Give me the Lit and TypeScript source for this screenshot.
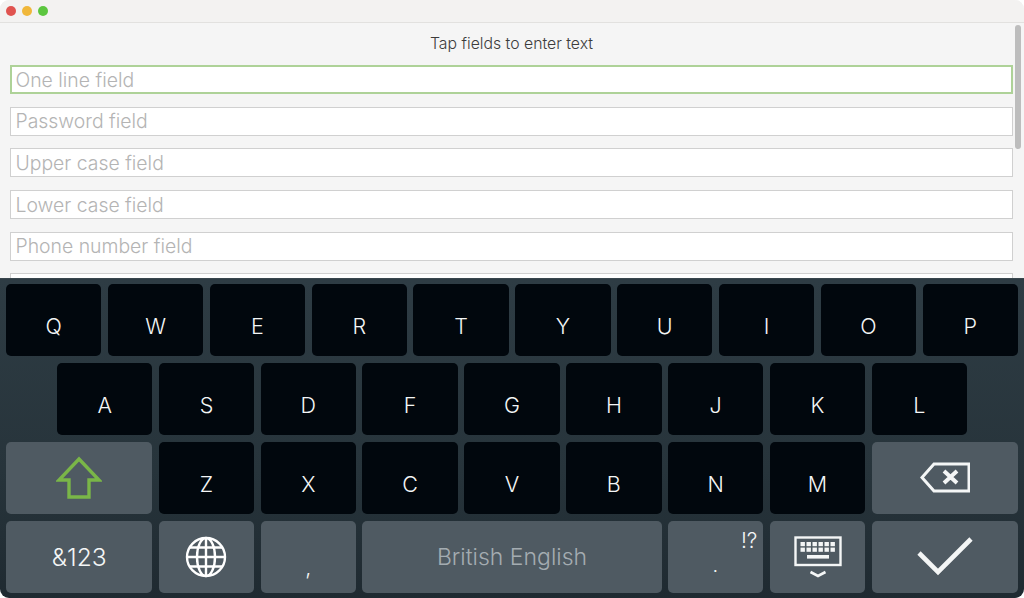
import { LitElement, html, svg, css } from "lit";
import { customElement } from "lit/decorators.js";

const FIELDS = ["One line field", "Password field", "Upper case field", "Lower case field", "Phone number field", ""];
const ROW1 = ["Q", "W", "E", "R", "T", "Y", "U", "I", "O", "P"];
const ROW2 = ["A", "S", "D", "F", "G", "H", "J", "K", "L"];
const ROW3 = ["Z", "X", "C", "V", "B", "N", "M"];

@customElement("app-root")
export class AppRoot extends LitElement {
  static styles = css`
    :host { display: block; width: 1024px; height: 598px; background: #fff; font-family: Inter, "Liberation Sans", sans-serif; }
    .window { width: 1024px; height: 598px; display: flex; flex-direction: column; overflow: hidden; border-radius: 9px; background: #f5f5f5; }
    .titlebar { flex: none; height: 22px; display: flex; align-items: center; gap: 6px; padding-left: 6px; background: #f3f2f1; border-bottom: 1px solid #e2e1df; box-sizing: content-box; }
    .dot { width: 10px; height: 10px; border-radius: 50%; }
    .content { flex: 1; min-height: 0; position: relative; overflow: hidden; padding: 0 11px 0 10px; display: flex; flex-direction: column; }
    .heading { flex: none; height: 42px; padding-bottom: 2px; box-sizing: border-box; display: flex; align-items: center; justify-content: center; font-size: 15.8px; font-weight: 300; color: #3c3c3c; }
    .fields { display: flex; flex-direction: column; gap: 12.7px; }
    .field { flex: none; height: 29px; box-sizing: border-box; background: #fff; border: 1px solid #d0d0d0; padding: 0 0 0 4.5px; display: flex; align-items: center; font-size: 19.4px; font-weight: 300; color: #b4b4b4; }
    .field.active { border: 2px solid #aed298; padding-left: 3.5px; }
    .scrollbar { position: absolute; left: 1015px; top: 2px; width: 6px; height: 124px; background: #bdbdbd; border-radius: 3px; }
    .keyboard { flex: none; height: 320px; box-sizing: border-box; padding: 5px 6px 6px; background: linear-gradient(#2e3c44, #27343b 60%, #1f2a31); border-top: 1px solid #39464d; display: grid; grid-template-columns: repeat(20, minmax(0, 1fr)); grid-auto-rows: 72.3px; column-gap: 6.4px; row-gap: 6.6px; }
    .key { grid-column: span 2; border-radius: 5px; background: #01070d; color: #f4f6f6; font-size: 21.5px; font-weight: 350; display: flex; align-items: flex-end; justify-content: center; padding-bottom: 18px; box-sizing: border-box; line-height: 24px; }
    .key.start2 { grid-column: 2 / span 2; }
    .key.fn { background: #4f5a62; }
    .key.w3 { grid-column: span 3; }
    .key.w6 { grid-column: span 6; }
    .key.center { align-items: center; padding-bottom: 0; }
    .key.lang { color: #a4acb1; font-size: 23px; font-weight: 300; }
    .key.comma { padding-bottom: 14px; }
    .num { font-size: 24.5px; font-weight: 300; }
    .punct { position: relative; }
    .punct .alt { position: absolute; right: 6px; top: 8px; font-size: 21px; font-weight: 300; }
    .punct .dotc { position: absolute; left: 45px; bottom: 19px; font-size: 16px; line-height: 16px; font-weight: 400; }
    svg { display: block; }
  `;

  private keyGlyphs() {
    const cells = [];
    for (const y of [6, 11.6]) {
      for (let c = 0; c < 6; c++) {
        cells.push(svg`<rect x="${6.5 + c * 6}" y="${y}" width="4.4" height="4.2" />`);
      }
    }
    return cells;
  }

  render() {
    return html`
      <div class="window">
        <div class="titlebar">
          <span class="dot" style="background:#e0534f"></span>
          <span class="dot" style="background:#f0b73a"></span>
          <span class="dot" style="background:#5cc63f"></span>
        </div>
        <div class="content">
          <div class="heading">Tap fields to enter text</div>
          <div class="fields">
            ${FIELDS.map((f, i) => html`<div class="field ${i === 0 ? "active" : ""}">${f}</div>`)}
          </div>
          <div class="scrollbar"></div>
        </div>
        <div class="keyboard">
          ${ROW1.map((k) => html`<div class="key">${k}</div>`)}
          ${ROW2.map((k, i) => html`<div class="key ${i === 0 ? "start2" : ""}">${k}</div>`)}
          <div class="key fn w3 center">
            <svg width="46" height="44" viewBox="0 0 46 44" fill="none" stroke="#7ab648" stroke-width="3.4" stroke-linejoin="miter">
              <path d="M23 3 L43 24 H33 V41 H13 V24 H3 Z" />
            </svg>
          </div>
          ${ROW3.map((k) => html`<div class="key">${k}</div>`)}
          <div class="key fn w3 center">
            <svg width="50" height="31" viewBox="0 0 50 31" fill="none" stroke="#f4f6f6" stroke-width="3">
              <path d="M49 2 H14 L2 15.5 L14 29 H49 Z" stroke-linejoin="miter" />
              <path d="M24 9 L37 21 M37 9 L24 21" stroke-width="4" />
            </svg>
          </div>
          <div class="key fn w3 center num">&amp;123</div>
          <div class="key fn center">
            <svg width="42" height="42" viewBox="0 0 42 42" fill="none" stroke="#fff" stroke-width="2.4">
              <circle cx="21" cy="21" r="19" />
              <ellipse cx="21" cy="21" rx="9" ry="19" />
              <path d="M21 2 V40 M2 21 H40 M5 11.5 H37 M5 30.5 H37" />
            </svg>
          </div>
          <div class="key fn comma">,</div>
          <div class="key fn w6 center lang">British English</div>
          <div class="key fn punct"><span class="alt">!?</span><span class="dotc">.</span></div>
          <div class="key fn center">
            <svg width="48" height="42" viewBox="0 0 48 42" class="kb-icon">
              <rect x="1.5" y="1.5" width="45" height="27.5" fill="none" stroke="#f4f6f6" stroke-width="2.4" />
              <g fill="#f4f6f6">
                ${this.keyGlyphs()}
                <rect x="13" y="19" width="22" height="3.6" />
              </g>
              <path d="M16.5 36 L24 40 L31.5 36" fill="none" stroke="#f4f6f6" stroke-width="2.6" />
            </svg>
          </div>
          <div class="key fn w3 center">
            <svg width="56" height="40" viewBox="0 0 56 40" fill="none" stroke="#f4f6f6" stroke-width="4.6">
              <path d="M2 16 L21 35 L54 2" />
            </svg>
          </div>
        </div>
      </div>
    `;
  }
}
